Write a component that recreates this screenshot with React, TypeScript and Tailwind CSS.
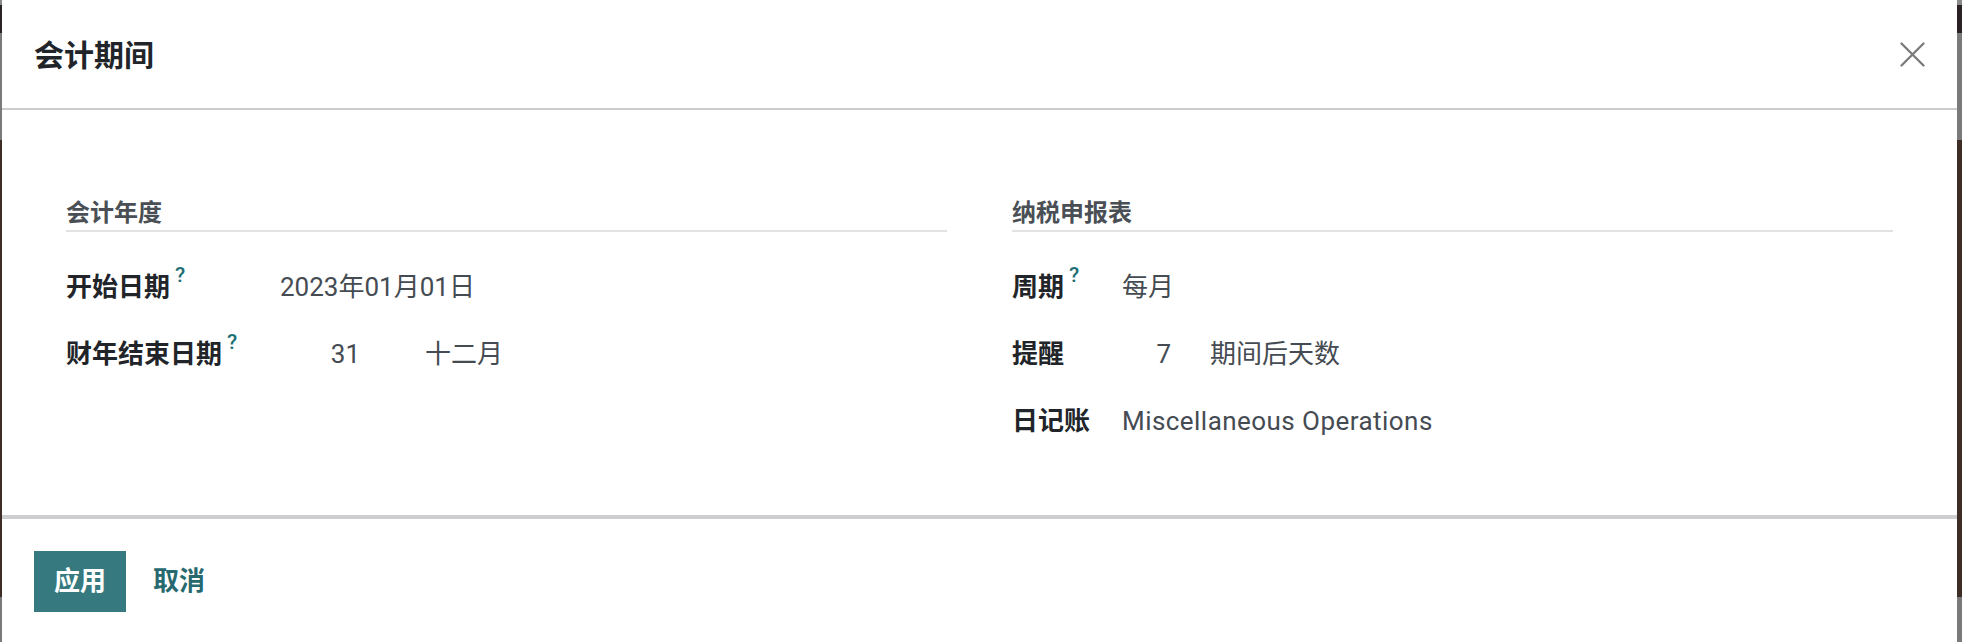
const font = "font-['Roboto','Noto_Sans_CJK_SC',sans-serif]";

function Help() {
  return (
    <span className="relative -top-[14px] ml-[5px] text-[21px] font-medium leading-none text-[#1d6f75]">?</span>
  );
}

function Row({ label, help, labelW, children }: { label: string; help?: boolean; labelW: string; children: React.ReactNode }) {
  return (
    <div className="flex h-[67px] items-center">
      <div className={`${labelW} shrink-0 whitespace-nowrap text-[26px] font-bold text-[#212529]`}>
        {label}
        {help && <Help />}
      </div>
      <div className="flex items-center text-[26px] text-[#454b52]">{children}</div>
    </div>
  );
}

function Strip() {
  return (
    <div className="flex w-full flex-col">
      <div className="h-[5px] bg-[#8a8a8a]" />
      <div className="h-[28px] bg-[#2a2124]" />
      <div className="h-[107px] bg-[#7a7a7a]" />
      <div className="h-[457px] bg-[#3e2c27]" />
      <div className="flex-1 bg-[#7a7a7a]" />
    </div>
  );
}

export default function App() {
  return (
    <div className={`flex h-[642px] w-[1962px] overflow-hidden bg-white ${font}`}>
      <div className="flex w-[2px] shrink-0">
        <Strip />
      </div>

      <div className="flex min-w-0 flex-1 flex-col bg-white">
        {/* header */}
        <div className="flex h-[110px] items-center justify-between border-b-2 border-[#cccccc] pl-[32px] pr-[32px]">
          <h4 className="pt-[2px] text-[30px] font-semibold text-[#212529]">会计期间</h4>
          <svg width="25" height="25" viewBox="0 0 25 25" className="mt-[1px]">
            <path d="M1.5 1.5 L23.5 23.5 M23.5 1.5 L1.5 23.5" stroke="#7a7a7a" strokeWidth="2.3" strokeLinecap="round" />
          </svg>
        </div>

        {/* body */}
        <div className="grid grid-cols-2 gap-x-[65px] px-[64px] pt-[86px] pb-[60px]">
          <div>
            <div className="h-[36px] border-b-2 border-[#e2e2e2] text-[24px] font-bold leading-[34px] text-[#4a4f55]">会计年度</div>
            <div className="mt-[22px]">
              <Row label="开始日期" help labelW="w-[214px]">
                2023年01月01日
              </Row>
              <Row label="财年结束日期" help labelW="w-[214px]">
                <span className="w-[80px] text-right">31</span>
                <span className="ml-[65px]">十二月</span>
              </Row>
            </div>
          </div>
          <div>
            <div className="h-[36px] border-b-2 border-[#e2e2e2] text-[24px] font-bold leading-[34px] text-[#4a4f55]">纳税申报表</div>
            <div className="mt-[22px]">
              <Row label="周期" help labelW="w-[110px]">
                每月
              </Row>
              <Row label="提醒" labelW="w-[110px]">
                <span className="w-[49px] text-right">7</span>
                <span className="ml-[39px]">期间后天数</span>
              </Row>
              <Row label="日记账" labelW="w-[110px]">
                <span className="tracking-[0.45px]">Miscellaneous Operations</span>
              </Row>
            </div>
          </div>
        </div>

        {/* footer */}
        <div className="flex flex-1 items-start gap-[27px] border-t-4 border-[#cdcdd2] pl-[32px] pt-[32px]">
          <button className="h-[61px] bg-[#367a7f] px-[20px] text-[26px] font-bold text-white">应用</button>
          <button className="h-[61px] text-[26px] font-bold text-[#27696e]">取消</button>
        </div>
      </div>

      <div className="flex w-[5px] shrink-0">
        <Strip />
      </div>
    </div>
  );
}
